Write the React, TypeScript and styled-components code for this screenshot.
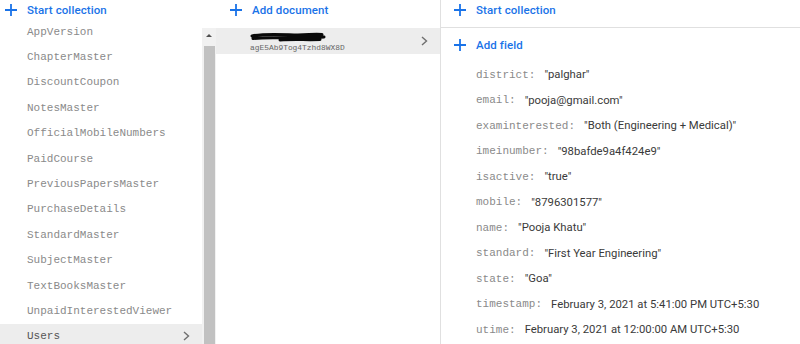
import styled, { createGlobalStyle } from "styled-components";

const collections = [
  "AppVersion",
  "ChapterMaster",
  "DiscountCoupon",
  "NotesMaster",
  "OfficialMobileNumbers",
  "PaidCourse",
  "PreviousPapersMaster",
  "PurchaseDetails",
  "StandardMaster",
  "SubjectMaster",
  "TextBooksMaster",
  "UnpaidInterestedViewer",
  "Users",
];

const fields: [string, string][] = [
  ["district", '"palghar"'],
  ["email", '"pooja@gmail.com"'],
  ["examinterested", '"Both (Engineering + Medical)"'],
  ["imeinumber", '"98bafde9a4f424e9"'],
  ["isactive", '"true"'],
  ["mobile", '"8796301577"'],
  ["name", '"Pooja Khatu"'],
  ["standard", '"First Year Engineering"'],
  ["state", '"Goa"'],
  ["timestamp", "February 3, 2021 at 5:41:00 PM UTC+5:30"],
  ["utime", "February 3, 2021 at 12:00:00 AM UTC+5:30"],
];

const Plus = () => (
  <svg width="12" height="12" viewBox="0 0 12 12">
    <path d="M6 0v12M0 6h12" stroke="#1a73e8" strokeWidth="1.8" />
  </svg>
);

const Chevron = () => (
  <svg width="7" height="10" viewBox="0 0 7 10">
    <path d="M1 1l4.5 4-4.5 4" stroke="#6f6f6f" strokeWidth="1.4" fill="none" />
  </svg>
);

// black marker scribble that hides the document name
const Redaction = () => (
  <svg width="76" height="10" viewBox="0 0 76 10">
    <path
      d="M2 4C14 1.5 30 2.5 44 3S62 1.5 72 2.5M3 6.5C18 5 34 6.5 48 5.5S64 6 74 5M30 8C44 7 56 8 70 7.5"
      stroke="#0a0a0a"
      strokeWidth="3"
      fill="none"
      strokeLinecap="round"
    />
  </svg>
);

const App = () => {
  return (
    <>
      <GlobalStyle />
      <Page>
        <LeftColumn>
          <ActionRow $height={19} $iconLeft={5}>
            <Plus />
            <span>Start collection</span>
          </ActionRow>
          <LeftBody>
            <List>
              {collections.map((name) => (
                <CollectionItem key={name} $selected={name === "Users"}>
                  <span>{name}</span>
                  {name === "Users" && <Chevron />}
                </CollectionItem>
              ))}
            </List>
            <ScrollTrack>
              <ScrollArrow />
              <ScrollThumb />
            </ScrollTrack>
          </LeftBody>
        </LeftColumn>

        <MiddleColumn>
          <ActionRow $height={19} $iconLeft={14}>
            <Plus />
            <span>Add document</span>
          </ActionRow>
          <Spacer />
          <DocRow>
            <DocText>
              <Redaction />
              <DocId>agE5Ab9Tog4Tzhd8WX8D</DocId>
            </DocText>
            <Chevron />
          </DocRow>
        </MiddleColumn>

        <RightColumn>
          <RightHeader>
            <ActionRow $height={19} $iconLeft={13}>
              <Plus />
              <span>Start collection</span>
            </ActionRow>
          </RightHeader>
          <ActionRow $height={34} $iconLeft={13}>
            <Plus />
            <span>Add field</span>
          </ActionRow>
          {fields.map(([key, value]) => (
            <FieldRow key={key}>
              <FieldKey>{key}:</FieldKey>
              <FieldValue>{value}</FieldValue>
            </FieldRow>
          ))}
        </RightColumn>
      </Page>
    </>
  );
};

export default App;

const GlobalStyle = createGlobalStyle`
  html, body {
    margin: 0;
    background: #fff;
    overflow: hidden;
  }
  body {
    font-family: Roboto, "Noto Sans", Arial, sans-serif;
  }
`;

const Page = styled.div`
  width: 800px;
  height: 344px;
  display: grid;
  grid-template-columns: 216px 225px 1fr;
  overflow: hidden;
`;

const LeftColumn = styled.div`
  display: flex;
  flex-direction: column;
  min-height: 0;
`;

const ActionRow = styled.div<{ $height: number; $iconLeft: number }>`
  height: ${({ $height }) => $height}px;
  flex-shrink: 0;
  display: flex;
  align-items: center;
  padding-left: ${({ $iconLeft }) => $iconLeft}px;

  svg {
    flex-shrink: 0;
  }

  span {
    margin-left: 10px;
    color: #1a73e8;
    font-size: 11.5px;
    font-weight: 500;
    letter-spacing: 0.1px;
  }
`;

const LeftBody = styled.div`
  flex: 1;
  display: flex;
  min-height: 0;
`;

const List = styled.div`
  flex: 1;
  display: flex;
  flex-direction: column;
`;

const CollectionItem = styled.div<{ $selected: boolean }>`
  height: 25.4px;
  flex-shrink: 0;
  display: flex;
  align-items: center;
  justify-content: space-between;
  padding: 0 12px 0 27px;
  background: ${({ $selected }) => ($selected ? "#ededed" : "transparent")};
  font-family: "Liberation Mono", "DejaVu Sans Mono", monospace;
  font-size: 11px;
  color: ${({ $selected }) => ($selected ? "#555" : "#8a8a8a")};
`;

const ScrollTrack = styled.div`
  width: 14px;
  margin-top: 9px;
  background: #f1f1f1;
  display: flex;
  flex-direction: column;
  align-items: center;
`;

const ScrollArrow = styled.div`
  margin-top: 6px;
  width: 0;
  height: 0;
  border-left: 3px solid transparent;
  border-right: 3px solid transparent;
  border-bottom: 3px solid #505050;
`;

const ScrollThumb = styled.div`
  margin-top: 9px;
  width: 11px;
  flex: 1;
  background: #c1c1c1;
`;

const MiddleColumn = styled.div`
  display: flex;
  flex-direction: column;
  border-right: 1px solid #e0e0e0;
`;

const Spacer = styled.div`
  height: 9px;
`;

const DocRow = styled.div`
  height: 26px;
  display: flex;
  align-items: center;
  justify-content: space-between;
  padding: 0 12px 0 34px;
  background: #ededed;
`;

const DocText = styled.div`
  display: flex;
  flex-direction: column;
  gap: 1px;
  padding-top: 2px;
`;

const DocId = styled.span`
  font-family: "Liberation Mono", "DejaVu Sans Mono", monospace;
  font-size: 7.9px;
  color: #666;
  line-height: 9px;
`;

const RightColumn = styled.div`
  display: flex;
  flex-direction: column;
`;

const RightHeader = styled.div`
  height: 28px;
  border-bottom: 1px solid #e0e0e0;
  box-sizing: border-box;
`;

const FieldRow = styled.div`
  height: 25.5px;
  flex-shrink: 0;
  display: flex;
  align-items: center;
  padding-left: 35px;
`;

const FieldKey = styled.span`
  font-family: "Liberation Mono", "DejaVu Sans Mono", monospace;
  font-size: 11px;
  color: #8a8a8a;
  margin-right: 9px;
`;

const FieldValue = styled.span`
  font-size: 11.3px;
  color: #3a3a3a;
`;
